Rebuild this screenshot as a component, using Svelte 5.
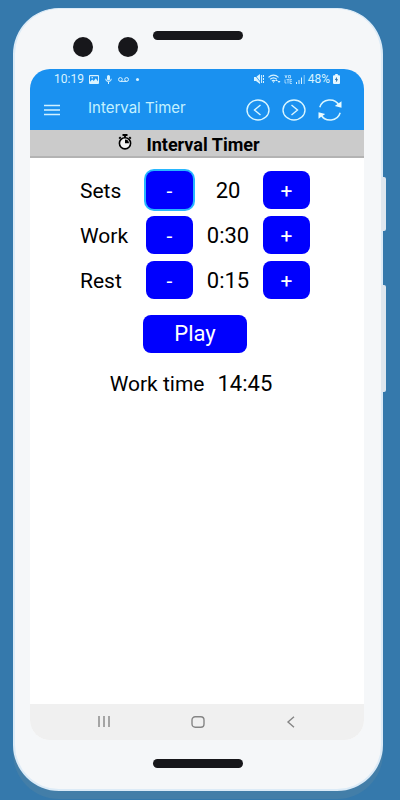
<script lang="ts">
  let sets = $state(20);
  let work = $state(30);
  let rest = $state(15);
  let running = $state(false);

  // no rest after the last set
  let total = $derived(sets * work + (sets - 1) * rest);

  function format(seconds: number) {
    const m = Math.floor(seconds / 60);
    const s = seconds % 60;
    return `${m}:${String(s).padStart(2, '0')}`;
  }
</script>

<div class="backdrop">
  <div class="phone">
    <div class="side-buttons">
      <span class="power"></span>
      <span class="volume"></span>
    </div>

    <div class="forehead">
      <span class="lens"></span>
      <span class="lens"></span>
      <span class="speaker"></span>
    </div>

    <div class="screen">
      <div class="status">
        <span>10:19</span>
        <svg class="picture" width="10" height="9" viewBox="0 0 10 9">
          <path fill="#d9f3ff" fill-rule="evenodd" d="M1 0h8a1 1 0 0 1 1 1v7a1 1 0 0 1-1 1H1a1 1 0 0 1-1-1V1a1 1 0 0 1 1-1zM1 1.2v5.6l2.2-2.4 1.6 1.5 2-2.6L9 6.4V1.2z" />
          <circle cx="3.2" cy="2.8" r=".8" fill="#d9f3ff" />
        </svg>
        <svg class="mic" width="7" height="9" viewBox="0 0 7 9">
          <rect x="2" y="0" width="3" height="5.4" rx="1.5" fill="#d9f3ff" />
          <path d="M.7 3.8a2.8 2.8 0 0 0 5.6 0M3.5 6.600V9" fill="none" stroke="#d9f3ff" />
        </svg>
        <svg class="voicemail" width="11" height="5" viewBox="0 0 11 5">
          <path d="M2.4 4.4h6.2" stroke="#d9f3ff" />
          <circle cx="2.4" cy="2.5" r="1.9" fill="none" stroke="#d9f3ff" />
          <circle cx="8.6" cy="2.5" r="1.9" fill="none" stroke="#d9f3ff" />
        </svg>
        <span class="dot"></span>

        <div class="signals">
          <svg width="11" height="10" viewBox="0 0 11 10">
            <path fill="#d9f3ff" d="M0 3h2l4-3v10L2 7H0z" />
            <path d="M.5.5l7 9" stroke="#1a91f0" stroke-width=".8" />
            <path d="M7.6 1v8M9.5 1v2M9.5 4v2M9.5 7v2" stroke="#d9f3ff" />
          </svg>
          <svg width="13" height="10" viewBox="0 0 13 10">
            <path d="M.5 3.400Q5.500-1 10.500 3.400M2.200 5.200Q5.500 2.400 8.800 5.200M3.900 7Q5.500 5.600 7.100 7" fill="none" stroke="#d9f3ff" stroke-width="1.200" />
            <path fill="#d9f3ff" d="M4.500 7.500h2L5.500 9zM7 7l1.500-1.500L10 7zM9.500 7h3L11 9z" />
          </svg>
          <svg width="9" height="9" viewBox="0 0 9 9">
            <path d="M1 0l1 3 1-3M4.500 .5h2v2.300h-2zM1 4.500v3.500h1.500M2.500 4.500h3M4 4.500v4M8 4.500H6v4h2M6 6.300h2" fill="none" stroke="#bfe6ff" stroke-width=".8" />
          </svg>
          <svg width="9" height="9" viewBox="0 0 9 9">
            <path d="M.5 7v2M3 5v4M5.500 2.500V9" stroke="#d9f3ff" />
            <path d="M8.200 0v9" stroke="#8accfa" />
          </svg>
          <span class="percent">48%</span>
          <svg width="7" height="10" viewBox="0 0 7 10">
            <path fill="#e6f7ff" d="M2.200 0h2.600v1.300H6q1 0 1 1V9q0 1-1 1H1Q0 10 0 9V2.300q0-1 1-1h1.200z" />
            <path fill="#2b6ea8" d="M4.100 2.800L1.800 6h1.400l-.4 2.600 2.400-3.300H3.800z" />
          </svg>
        </div>
      </div>

      <header>
        <button class="icon menu" aria-label="Menu">
          <svg width="16" height="12" viewBox="0 0 16 12">
            <path d="M0 1.500h16M0 6h16M0 10.500h16" stroke="#d2f1ff" stroke-width="1.400" />
          </svg>
        </button>
        <span class="app-name">Interval Timer</span>
        <button class="icon" aria-label="Back">
          <svg width="24" height="24" viewBox="0 0 24 24" fill="none" stroke="#d9f6ff" stroke-width="1.400">
            <ellipse cx="12" cy="12" rx="11" ry="10" />
            <path d="M14.500 7L8.500 12l6 5" />
          </svg>
        </button>
        <button class="icon" aria-label="Forward">
          <svg width="24" height="24" viewBox="0 0 24 24" fill="none" stroke="#d9f6ff" stroke-width="1.400">
            <ellipse cx="12" cy="12" rx="11" ry="10" />
            <path d="M9.500 7l6 5-6 5" />
          </svg>
        </button>
        <button class="icon" aria-label="Refresh">
          <svg width="24" height="24" viewBox="0 0 24 24">
            <path d="M1.800 9.200C4.500 .5 16.500-.8 21.300 7.500M22.200 14.800C19.500 23.500 7.500 24.800 2.700 16.500" fill="none" stroke="#d9f6ff" stroke-width="1.500" />
            <path fill="#e8fbff" d="M23.500 3.200v6.600l-6.700-1.700zM.5 20.800v-6.600l6.700 1.700z" />
          </svg>
        </button>
      </header>

      <div class="title">
        <svg width="14" height="16" viewBox="0 0 14 16">
          <path d="M4.500 1h5M7 1v3M11.300 3.200l1.500 1.500M2.700 3.200L1.200 4.700" stroke="#000" stroke-width="1.900" />
          <circle cx="7" cy="9.300" r="5.600" fill="#f4f4f4" stroke="#000" stroke-width="1.600" />
          <path d="M7 5.400v3.900h4A4 4 0 0 0 7 5.400z" />
        </svg>
        <h1>Interval Timer</h1>
      </div>

      <main>
        <div class="settings">
          <span>Sets</span>
          <button class="step active" aria-label="Fewer sets" onclick={() => (sets = Math.max(1, sets - 1))}>-</button>
          <output>{sets}</output>
          <button class="step" aria-label="More sets" onclick={() => sets++}>+</button>

          <span>Work</span>
          <button class="step" aria-label="Less work" onclick={() => (work = Math.max(5, work - 5))}>-</button>
          <output>{format(work)}</output>
          <button class="step" aria-label="More work" onclick={() => (work += 5)}>+</button>

          <span>Rest</span>
          <button class="step" aria-label="Less rest" onclick={() => (rest = Math.max(0, rest - 5))}>-</button>
          <output>{format(rest)}</output>
          <button class="step" aria-label="More rest" onclick={() => (rest += 5)}>+</button>
        </div>

        <button class="play" onclick={() => (running = !running)}>{running ? 'Stop' : 'Play'}</button>

        <p class="total"><span>Work time</span><output>{format(total)}</output></p>
      </main>

      <nav>
        <button class="icon" aria-label="Recent apps">
          <svg width="14" height="12" viewBox="0 0 14 12">
            <path d="M2 0v11M7 0v11M12 0v11" stroke="#858585" stroke-width="1.400" />
          </svg>
        </button>
        <button class="icon" aria-label="Home">
          <svg width="14" height="12" viewBox="0 0 14 12">
            <rect x="1" y=".8" width="12" height="10.400" rx="3.200" fill="none" stroke="#858585" stroke-width="1.400" />
          </svg>
        </button>
        <button class="icon" aria-label="Previous">
          <svg width="14" height="12" viewBox="0 0 14 12">
            <path d="M10 .8L4 6l6 5.200" fill="none" stroke="#858585" stroke-width="1.400" />
          </svg>
        </button>
      </nav>
    </div>

    <div class="chin"><span class="speaker"></span></div>
  </div>
</div>

<style>
  :global(body) {
    background: #3579ac;
  }

  .backdrop {
    box-sizing: border-box;
    min-height: 100vh;
    padding: 8px 17px 9px 13px;
    display: flex;
    font-family: Roboto, sans-serif;
    color: #000;
  }

  .phone {
    position: relative;
    flex: 1;
    box-sizing: border-box;
    display: flex;
    flex-direction: column;
    padding: 0 17px 0 15px;
    border: 2px solid #dcebf7;
    border-top-width: 1px;
    border-radius: 46px;
    background: #f5f7f9;
    box-shadow: 0 8px 0 #437ea8;
  }

  .side-buttons {
    position: absolute;
    top: 168px;
    left: 100%;
    width: 5px;
  }

  .side-buttons span {
    display: block;
    background: #dfe7ef;
    border-radius: 0 2px 2px 0;
  }

  .power {
    height: 54px;
    margin-bottom: 54px;
  }

  .volume {
    height: 107px;
  }

  .forehead {
    height: 60px;
    display: flex;
    align-items: flex-start;
    padding: 0 0 0 43px;
  }

  .lens {
    width: 20px;
    height: 20px;
    margin: 28px 25px 0 0;
    border-radius: 50%;
    background: #17171b;
  }

  .speaker {
    width: 90px;
    height: 9px;
    border-radius: 5px;
    background: #17171b;
  }

  .forehead .speaker {
    margin: 22px 0 0 -10px;
  }

  .screen {
    flex: 1;
    display: flex;
    flex-direction: column;
    overflow: hidden;
    border-radius: 20px;
    background: #fff;
  }

  .status {
    display: flex;
    align-items: center;
    height: 20px;
    padding: 0 24px;
    background: #1a91f0;
    color: #d9f3ff;
    font-size: 12px;
    line-height: 20px;
  }

  .picture {
    margin-left: 5px;
  }

  .mic,
  .voicemail {
    margin-left: 6px;
  }

  .dot {
    width: 3px;
    height: 3px;
    margin-left: 7px;
    border-radius: 50%;
    background: #d9f3ff;
  }

  .signals {
    margin-left: auto;
    display: flex;
    align-items: center;
    gap: 3px;
  }

  header {
    display: flex;
    align-items: center;
    gap: 12px;
    height: 41px;
    padding: 0 22px 0 14px;
    background: #1a91f0;
  }

  .icon {
    display: flex;
    padding: 0;
    border: 0;
    background: none;
    cursor: pointer;
  }

  .menu {
    margin-right: 16px;
  }

  .app-name {
    flex: 1;
    font-family: Inter, sans-serif;
    font-size: 15px;
    line-height: 20px;
    padding-bottom: 4px;
    color: #c4f1ff;
    white-space: nowrap;
  }

  .title {
    display: flex;
    align-items: center;
    justify-content: center;
    gap: 14px;
    height: 26px;
    padding-right: 16px;
    background: #cbcbcb;
    border-bottom: 2px solid #b3b3b3;
  }

  .title svg {
    margin-bottom: 2px;
  }

  h1 {
    margin: 4px 0 0;
    font-size: 18px;
    line-height: 20px;
    font-weight: 700;
  }

  main {
    flex: 1;
    display: flex;
    flex-direction: column;
    align-items: center;
    padding: 13px 4px 0 0;
    font-size: 21px;
    line-height: 26px;
  }

  .settings {
    display: grid;
    grid-template-columns: 66px 47px 70px 47px;
    row-gap: 7px;
    align-items: center;
  }

  .settings span,
  .settings output {
    padding-top: 2px;
  }

  output {
    font-size: 22px;
    text-align: center;
  }

  .step,
  .play {
    height: 38px;
    padding: 0;
    border: 0;
    border-radius: 8px;
    background: #0000fe;
    color: #fff;
    font: inherit;
    cursor: pointer;
  }

  .step {
    padding-top: 2px;
  }

  .active {
    box-shadow: 0 0 0 2px #27b7ff;
  }

  .play {
    width: 104px;
    margin-top: 16px;
    font-size: 22px;
  }

  .total {
    display: flex;
    gap: 13px;
    margin: 18px 0 0;
    padding-right: 8px;
  }

  nav {
    display: flex;
    align-items: center;
    justify-content: space-between;
    height: 36px;
    padding: 0 66px 0 67px;
    background: #f0f0f0;
  }

  .chin {
    display: flex;
    justify-content: center;
    height: 49px;
    padding-left: 2px;
  }

  .chin .speaker {
    margin-top: 19px;
  }
</style>
